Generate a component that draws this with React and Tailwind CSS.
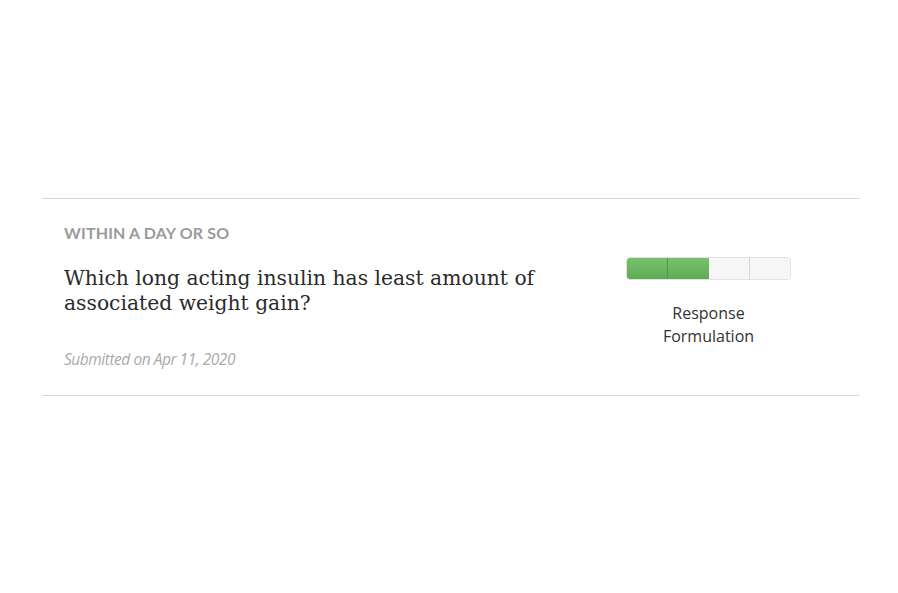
export default function App() {
  return (
    <div className="h-screen w-full bg-white flex items-center">
      <div className="ml-[42px] w-[818px] border-t border-b border-[#d6d6d6] pl-[22px] pr-[69px] pt-[23px] pb-[26px] flex justify-between">
        <div className="flex flex-col">
          <p className="text-[16px] leading-[22px] font-bold text-[#9b9b9b] tracking-[0.01em]" style={{ fontFamily: 'Lato, sans-serif' }}>
            WITHIN A DAY OR SO
          </p>
          <h1 className="mt-[22px] w-[480px] text-[20.3px] leading-[25px] text-[#2b2b2b]" style={{ fontFamily: '"DejaVu Serif", serif' }}>
            Which long acting insulin has least amount of associated weight gain?
          </h1>
          <p className="mt-[33px] text-[15.5px] leading-[20px] italic text-[#aaaaaa] tracking-[-0.03em]" style={{ fontFamily: '"Open Sans", sans-serif' }}>
            Submitted on Apr 11, 2020
          </p>
        </div>
        <div className="flex flex-col items-center pt-[35px]">
          <div className="flex w-[165px] h-[23px] rounded-[4px] overflow-hidden border border-[#e3e3e3]">
            <div className="flex-1 bg-gradient-to-b from-[#79c06f] to-[#5fab55] border-r border-[#4f9a46]"></div>
            <div className="flex-1 bg-gradient-to-b from-[#79c06f] to-[#5fab55]"></div>
            <div className="flex-1 bg-[#f6f6f6] border-r border-[#d6d6d6]"></div>
            <div className="flex-1 bg-[#f6f6f6]"></div>
          </div>
          <p className="mt-[22px] text-center text-[16px] leading-[23px] text-[#333333]" style={{ fontFamily: '"Open Sans", sans-serif' }}>
            Response
            <br />
            Formulation
          </p>
        </div>
      </div>
    </div>
  );
}
